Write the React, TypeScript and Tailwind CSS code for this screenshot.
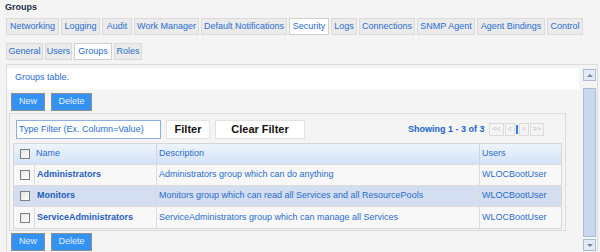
const topTabs: [string, string][] = [
  ["Networking", "w-[53px]"],
  ["Logging", "w-[39px]"],
  ["Audit", "w-[30px]"],
  ["Work Manager", "w-[65px]"],
  ["Default Notifications", "w-[86px]"],
  ["Security", "w-[40px]"],
  ["Logs", "w-[26px]"],
  ["Connections", "w-[56px]"],
  ["SNMP Agent", "w-[58px]"],
  ["Agent Bindings", "w-[68px]"],
  ["Control", "w-[36px]"],
];

const subTabs: [string, string][] = [
  ["General", "w-[37px]"],
  ["Users", "w-[27px]"],
  ["Groups", "w-[38px]"],
  ["Roles", "w-[28px]"],
];

const groups = [
  { name: "Administrators", desc: "Administrators group which can do anything", users: "WLOCBootUser" },
  { name: "Monitors", desc: "Monitors group which can read all Services and all ResourcePools", users: "WLOCBootUser" },
  { name: "ServiceAdministrators", desc: "ServiceAdministrators group which can manage all Services", users: "WLOCBootUser" },
];

function Tab({ label, width, active }: { label: string; width: string; active?: boolean }) {
  return (
    <div
      className={`${width} h-[17px] flex items-center justify-center border text-[9px] text-[#2a6dcf] whitespace-nowrap ${
        active ? "bg-white border-[#cfcfcf]" : "bg-[#ebebeb] border-[#dadada]"
      }`}
    >
      {label}
    </div>
  );
}

function Checkbox() {
  return <div className="w-[10px] h-[10px] border border-[#7d7d7d] bg-linear-to-br from-[#e4e4e4] to-white" />;
}

function BlueButton({ label, width }: { label: string; width: string }) {
  return (
    <div className={`${width} h-[18px] flex items-center justify-center bg-[#3293f4] border border-[#8f8f8f] text-[9px] text-[#e4eeff]`}>
      {label}
    </div>
  );
}

function ActionButtons() {
  return (
    <div className="flex gap-[6px] pl-[4px]">
      <BlueButton label="New" width="w-[34px]" />
      <BlueButton label="Delete" width="w-[41px]" />
    </div>
  );
}

function PageBox({ label }: { label: string }) {
  return (
    <div className="h-[13px] px-[2px] flex items-center justify-center border border-[#dcdcdc] text-[7px] text-[#bdbdbd]">
      {label}
    </div>
  );
}

export default function App() {
  return (
    <div className="w-[600px] h-[252px] overflow-hidden bg-[#f4f4f4] font-['Liberation_Sans',Arial,sans-serif]">
      <div className="pl-[5px] pt-[1px] h-[13px] leading-[12px] text-[9px] font-bold text-[#1f2f4d]">Groups</div>

      {/* tabs */}
      <div className="mt-[5px] pl-[6px] flex gap-[2px]">
        {topTabs.map(([label, w]) => (
          <Tab key={label} label={label} width={w} active={label === "Security"} />
        ))}
      </div>
      <div className="mt-[8px] pl-[6px] flex gap-[2px]">
        {subTabs.map(([label, w]) => (
          <Tab key={label} label={label} width={w} active={label === "Groups"} />
        ))}
      </div>

      {/* panel */}
      <div className="mt-[4px] ml-[6px] w-[592px] h-[187px] border-l border-t border-r border-[#dcdcdc] flex">
        <div className="flex-1 flex flex-col">
          <div className="mt-[3px] mr-[4px] h-[22px] bg-white pl-[8px] pt-[3px] leading-[12px] text-[9px] text-[#2a6dcf]">
            Groups table.
          </div>

          <div className="mt-[3px]">
            <ActionButtons />
          </div>

          <div className="mt-[2px] ml-[2px] w-[557px] h-[118px] border border-[#dcdcdc] flex flex-col">
            <div className="pt-[6px] pl-[6px] pr-[21px] flex items-center">
              <div className="w-[145px] h-[19px] bg-white border border-[#8fb0dc] flex items-center pl-[2px] text-[9px] text-[#2a6dcf] whitespace-nowrap">
                Type Filter (Ex. Column=Value)
              </div>
              <div className="ml-[5px] w-[44px] h-[19px] bg-white border border-[#e2e2e2] flex items-center justify-center text-[11px] font-bold text-[#111]">
                Filter
              </div>
              <div className="ml-[5px] w-[90px] h-[19px] bg-white border border-[#e2e2e2] flex items-center justify-center text-[11px] font-bold text-[#111]">
                Clear Filter
              </div>
              <div className="ml-auto text-[9px] font-bold text-[#2265c8] whitespace-nowrap">Showing 1 - 3 of 3</div>
              <div className="ml-[5px] flex items-center gap-[1px]">
                <PageBox label="<<" />
                <PageBox label="<" />
                <div className="w-[2px] h-[9px] bg-[#2f7be0]" />
                <PageBox label=">" />
                <PageBox label=">>" />
              </div>
            </div>

            <div className="mt-[4px] ml-[3px] w-[549px] border border-[#d6d6d6] text-[9px]">
              <div className="grid grid-cols-[20px_122px_323px_82px] h-[21px] bg-linear-to-b from-[#eef4fd] to-[#d3e3f8] border-b border-[#dcdcdc] text-[#2c6cc8]">
                <div className="flex items-center pl-[6px]">
                  <Checkbox />
                </div>
                <div className="flex items-center pl-[2px]">Name</div>
                <div className="flex items-center pl-[2px] border-l border-[#d0d6df]">Description</div>
                <div className="flex items-center pl-[2px] border-l border-[#d0d6df]">Users</div>
              </div>
              {groups.map((g, i) => (
                <div
                  key={g.name}
                  className={`grid grid-cols-[20px_122px_323px_82px] h-[21px] text-[#2a6ccb] ${
                    i < groups.length - 1 ? "border-b border-[#dcdcdc]" : ""
                  } ${i === 1 ? "bg-[#d3dff1]" : "bg-[#f8f8f8]"}`}
                >
                  <div className="flex items-center pl-[6px]">
                    <Checkbox />
                  </div>
                  <div className="flex items-center pl-[2px] border-l border-[#dcdcdc] font-bold text-[#1d5cbf]">{g.name}</div>
                  <div className="flex items-center pl-[2px] border-l border-[#dcdcdc] whitespace-nowrap">{g.desc}</div>
                  <div className="flex items-center pl-[2px] border-l border-[#dcdcdc]">{g.users}</div>
                </div>
              ))}
            </div>
          </div>

          <div className="mt-[2px]">
            <ActionButtons />
          </div>
        </div>

        {/* scrollbar */}
        <div className="w-[14px] pt-[4px] flex flex-col">
          <div className="h-[12px] w-[13px] bg-[#e3eaf4] border border-[#a9bbd6] flex items-center justify-center">
            <div className="w-0 h-0 border-l-[3px] border-r-[3px] border-b-[3px] border-l-transparent border-r-transparent border-b-[#6f86a8]" />
          </div>
          <div className="flex-1 pt-[7px] pb-[2px]">
            <div className="h-full w-[13px] bg-[#c9d8ee] border border-[#a9bcd8]" />
          </div>
          <div className="h-[12px] w-[13px] bg-[#e3eaf4] border border-[#a9bbd6] flex items-center justify-center">
            <div className="w-0 h-0 border-l-[3px] border-r-[3px] border-t-[3px] border-l-transparent border-r-transparent border-t-[#6f86a8]" />
          </div>
        </div>
      </div>
    </div>
  );
}
